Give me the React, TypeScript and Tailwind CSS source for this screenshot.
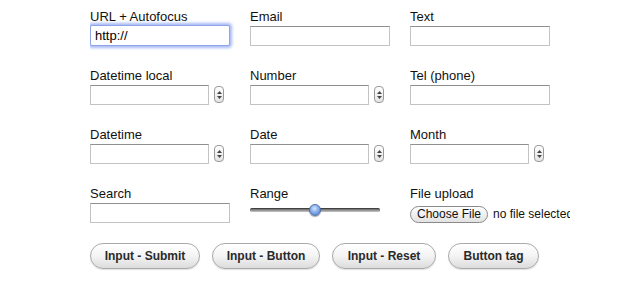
import React from "react";

const inputCls =
  "block h-[20px] border border-[#c3c3c3] border-t-[#8f8f8f] bg-white";

function Spinner() {
  return (
    <div className="ml-[5px] mt-[1px] flex h-[17px] w-[10px] flex-col items-center justify-center gap-[2px] rounded-[4px] border border-[#9a9a9a] bg-gradient-to-b from-white to-[#e4e4e4]">
      <svg width="5" height="3" viewBox="0 0 5 3">
        <path d="M2.5 0 L5 3 L0 3 Z" fill="#444" />
      </svg>
      <svg width="5" height="3" viewBox="0 0 5 3">
        <path d="M0 0 L5 0 L2.5 3 Z" fill="#444" />
      </svg>
    </div>
  );
}

function Field({ label, children }: { label: string; children: React.ReactNode }) {
  return (
    <div className="h-[59px] w-[160px] overflow-hidden">
      <div className="h-[18px] text-[13px] leading-[18px] text-[#111] whitespace-nowrap">{label}</div>
      <div className="flex">{children}</div>
    </div>
  );
}

function Btn({ label, w }: { label: string; w: string }) {
  return (
    <div
      className={`${w} flex h-[26px] items-center justify-center rounded-full border border-[#a9a9a9] bg-gradient-to-b from-white via-[#f4f4f4] to-[#dcdcdc] text-[12px] font-bold text-[#2a2a2a] shadow-[0_1px_1px_rgba(0,0,0,0.12)]`}
    >
      {label}
    </div>
  );
}

export default function App() {
  return (
    <div
      className="h-[282px] w-[640px] bg-white pl-[90px] pt-[8px]"
      style={{ fontFamily: '"Liberation Sans", Arial, sans-serif' }}
    >
      <div className="grid grid-cols-[160px_160px_160px]">
        <Field label="URL + Autofocus">
          <div className="-mt-[1px] flex h-[21px] w-[140px] items-center rounded-[2px] border border-[#8ea6e8] bg-white pl-[4px] text-[13px] text-black shadow-[0_0_3px_2px_rgba(110,140,240,0.6)]">
            http://
          </div>
        </Field>
        <Field label="Email">
          <div className={`${inputCls} w-[140px]`} />
        </Field>
        <Field label="Text">
          <div className={`${inputCls} w-[140px]`} />
        </Field>

        <Field label="Datetime local">
          <div className={`${inputCls} w-[119px]`} />
          <Spinner />
        </Field>
        <Field label="Number">
          <div className={`${inputCls} w-[119px]`} />
          <Spinner />
        </Field>
        <Field label="Tel (phone)">
          <div className={`${inputCls} w-[140px]`} />
        </Field>

        <Field label="Datetime">
          <div className={`${inputCls} w-[119px]`} />
          <Spinner />
        </Field>
        <Field label="Date">
          <div className={`${inputCls} w-[119px]`} />
          <Spinner />
        </Field>
        <Field label="Month">
          <div className={`${inputCls} w-[119px]`} />
          <Spinner />
        </Field>

        <Field label="Search">
          <div className={`${inputCls} w-[140px]`} />
        </Field>
        <Field label="Range">
          <div className="relative h-[18px] w-[130px]">
            <div className="absolute left-0 right-0 top-[5px] h-[4px] rounded-full bg-gradient-to-b from-[#5a5a5a] via-[#8a8a8a] to-[#c8c8c8] shadow-[inset_0_1px_1px_rgba(0,0,0,0.4)]" />
            <div className="absolute left-[59px] top-[1px] h-[12px] w-[12px] rounded-full border border-[#4d6fa8] bg-[radial-gradient(circle_at_45%_35%,#d6e6ff_0%,#8fb4ee_40%,#4a78c8_100%)] shadow-[0_1px_1px_rgba(0,0,0,0.35)]" />
          </div>
        </Field>
        <Field label="File upload">
          <div className="mt-[2px] flex items-center whitespace-nowrap">
            <div className="flex h-[17px] w-[78px] shrink-0 items-center justify-center rounded-full border border-[#8a8a8a] bg-gradient-to-b from-white to-[#e2e2e2] text-[12px] text-[#111]">
              Choose File
            </div>
            <span className="ml-[5px] text-[12px] text-[#111]">no file selected</span>
          </div>
        </Field>
      </div>
      <div className="-mt-[1px] flex gap-[12px]">
        <Btn label="Input - Submit" w="w-[110px]" />
        <Btn label="Input - Button" w="w-[108px]" />
        <Btn label="Input - Reset" w="w-[104px]" />
        <Btn label="Button tag" w="w-[91px]" />
      </div>
    </div>
  );
}
